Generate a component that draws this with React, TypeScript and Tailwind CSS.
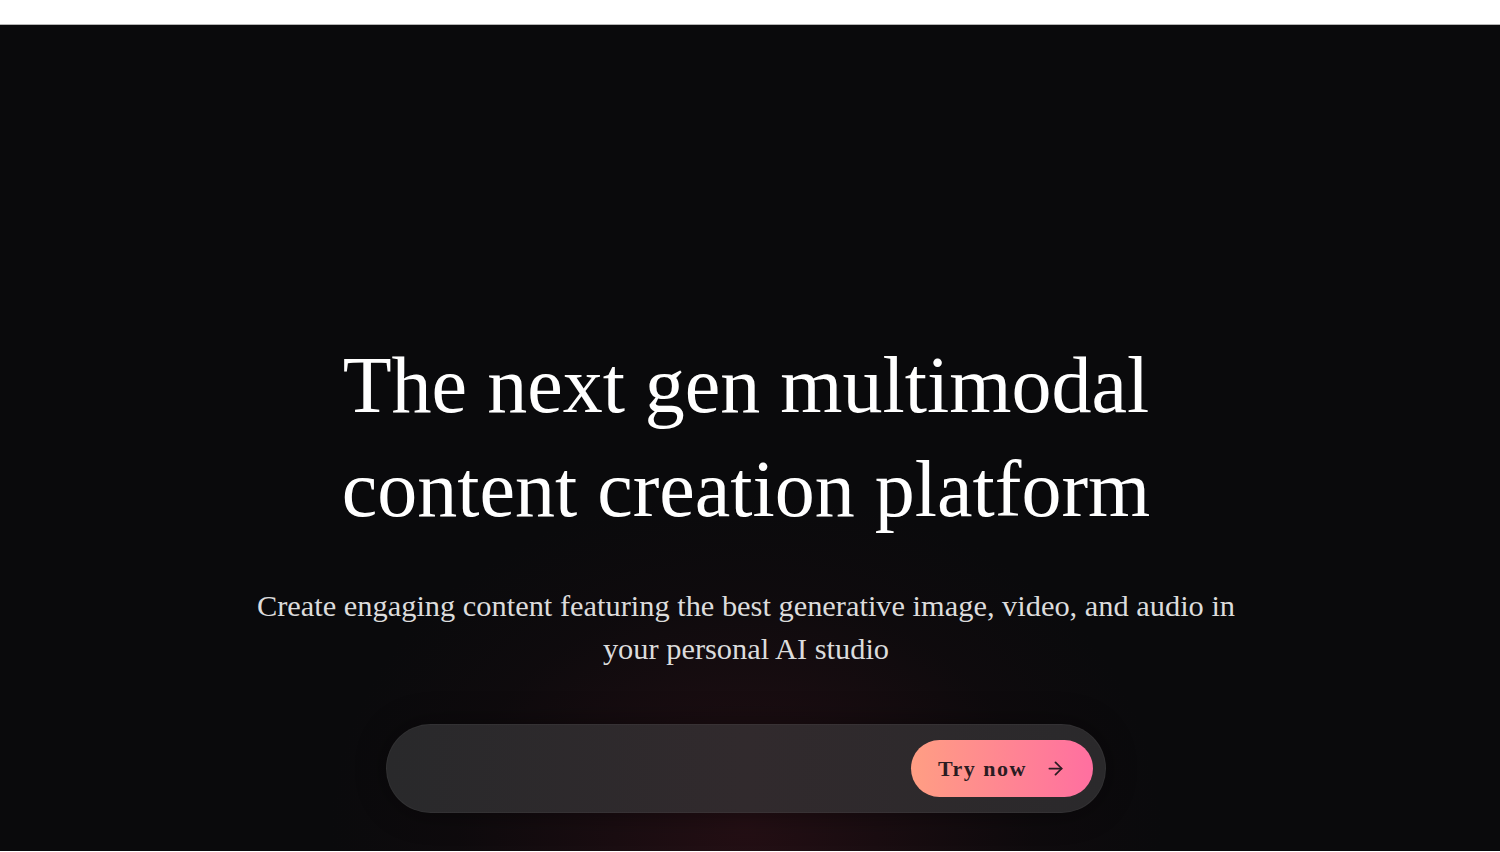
import React from "react";
import { ArrowRight } from "lucide-react";

export default function App() {
    return (
        <div className="min-h-[852px] bg-white font-['Liberation_Serif','Times_New_Roman',serif]">
            {/* top strip */}
            <div className="h-[25px] bg-white border-b border-[#b5b5b5]" />

            <section className="relative min-h-[826px] overflow-hidden bg-[#0a0a0c]">
                <div className="pointer-events-none absolute inset-0 bg-[radial-gradient(ellipse_520px_420px_at_746px_800px,rgba(72,22,32,0.42),rgba(40,14,20,0.14)_55%,transparent_80%)]" />

                <div className="relative flex flex-col items-center pt-[308px] pr-[8px]">
                    <h1 className="max-w-[900px] text-center text-[80px] leading-[104px] text-white">
                        The next gen multimodal content creation platform
                    </h1>

                    <p className="mt-[44px] max-w-[1010px] text-center text-[30.4px] leading-[43px] text-[#dcdcdc]">
                        Create engaging content featuring the best generative image, video, and audio in your personal AI studio
                    </p>

                    <div className="mt-[53px] flex h-[89px] w-[720px] items-center justify-end rounded-full border border-white/[0.04] bg-[linear-gradient(90deg,#29292b,#312a2d_50%,#2a292b)] pr-[12px] shadow-[0_0_30px_rgba(0,0,0,0.4)]">
                        <button className="flex h-[57px] w-[182px] items-center justify-center gap-[18px] rounded-full bg-[linear-gradient(90deg,#ff9e83,#ff6fa0)] text-[22px] font-bold tracking-[1.5px] text-[#2b1c22]">
                            <span>Try now</span>
                            <ArrowRight size={21} strokeWidth={2} />
                        </button>
                    </div>
                </div>
            </section>
        </div>
    );
}
